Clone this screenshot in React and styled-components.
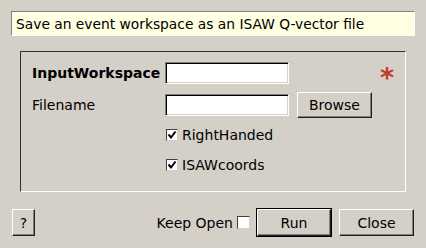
import React from "react";
import styled, { createGlobalStyle } from "styled-components";

const GlobalStyle = createGlobalStyle`
  html, body {
    margin: 0;
    padding: 0;
    background: #d4d0c8;
  }
  body {
    font-family: "DejaVu Sans", "Liberation Sans", sans-serif;
    font-size: 14px;
    color: #000;
  }
`;

const CheckMark = () => (
  <svg width="10" height="10" viewBox="0 0 10 10">
    <path d="M1.5 4.5 L4 7.5 L8.5 1.5" fill="none" stroke="#000" strokeWidth="2" />
  </svg>
);

const CheckBox = ({ checked, label, size = 12 }) => (
  <CheckRow>
    <Box $size={size}>{checked && <CheckMark />}</Box>
    {label && <span>{label}</span>}
  </CheckRow>
);

const App = () => {
  return (
    <>
      <GlobalStyle />
      <Dialog>
        <Description>Save an event workspace as an ISAW Q-vector file</Description>

        <Group>
          <Label $bold>InputWorkspace</Label>
          <TextInput />
          <span />
          <Star>*</Star>

          <Label>Filename</Label>
          <TextInput />
          <Button $w={75} $h={26} $ml={8}>Browse</Button>
          <span />

          <span />
          <CheckBox checked label="RightHanded" />
          <span />
          <span />

          <span />
          <CheckBox checked label="ISAWcoords" />
          <span />
          <span />
        </Group>

        <Footer>
          <Button $w={23} $h={27}>?</Button>
          <KeepOpen>
            Keep Open
            <CheckBox size={13} />
          </KeepOpen>
          <Button $w={74} $h={27} $ml={7} $default>Run</Button>
          <Button $w={75} $h={27} $ml={8}>Close</Button>
        </Footer>
      </Dialog>
    </>
  );
};

const Dialog = styled.div`
  width: 426px;
  height: 248px;
  box-sizing: border-box;
  padding: 11px 11px 0 11px;
`;

const Description = styled.div`
  height: 25px;
  box-sizing: border-box;
  background: #ffffe1;
  border: 1px solid;
  border-color: #808080 #ffffff #ffffff #808080;
  padding: 0 4px;
  font-size: 13.8px;
  display: flex;
  align-items: center;
  white-space: nowrap;
`;

const Group = styled.div`
  margin: 15px 9px 0 9px;
  height: 141px;
  box-sizing: border-box;
  border: 1px solid;
  border-color: #303030 #ffffff #ffffff #303030;
  padding: 6px 0 0 11px;
  display: grid;
  grid-template-columns: 133px 124px 83px auto;
  grid-template-rows: 30px 34px 26px 34px;
  align-items: center;
`;

const Label = styled.span`
  font-weight: ${(p) => (p.$bold ? "bold" : "normal")};
  white-space: nowrap;
`;

const TextInput = styled.div`
  width: 124px;
  height: 22px;
  box-sizing: border-box;
  background: #fff;
  border: 1px solid;
  border-color: #808080 #ffffff #ffffff #808080;
  box-shadow: inset 1px 1px #000, inset -1px -1px #d4d0c8;
`;

const Button = styled.div`
  width: ${(p) => p.$w}px;
  height: ${(p) => p.$h}px;
  box-sizing: border-box;
  flex-shrink: 0;
  display: flex;
  align-items: center;
  justify-content: center;
  margin-left: ${(p) => p.$ml || 0}px;
  background: #d4d0c8;
  border: 1px solid;
  border-color: #ffffff #202020 #202020 #ffffff;
  box-shadow: inset -1px -1px #808080;
  outline: ${(p) => (p.$default ? "1px solid #000" : "none")};
`;

const Star = styled.span`
  font-family: "DejaVu Sans", sans-serif;
  font-weight: bold;
  font-size: 27px;
  color: #c0392b;
  line-height: 1;
  padding: 9px 0 0 8px;
`;

const CheckRow = styled.div`
  display: flex;
  align-items: center;
  gap: 4px;
  margin-left: 1px;
`;

const Box = styled.div`
  width: ${(p) => p.$size}px;
  height: ${(p) => p.$size}px;
  box-sizing: border-box;
  background: #fff;
  border: 1px solid;
  border-color: #404040 #d4d0c8 #d4d0c8 #404040;
  display: flex;
  align-items: center;
  justify-content: center;
`;

const Footer = styled.div`
  margin: 17px 1px 0 1px;
  display: flex;
  align-items: center;
`;

const KeepOpen = styled.div`
  margin-left: auto;
  display: flex;
  align-items: center;
  gap: 3px;
`;

export default App;
